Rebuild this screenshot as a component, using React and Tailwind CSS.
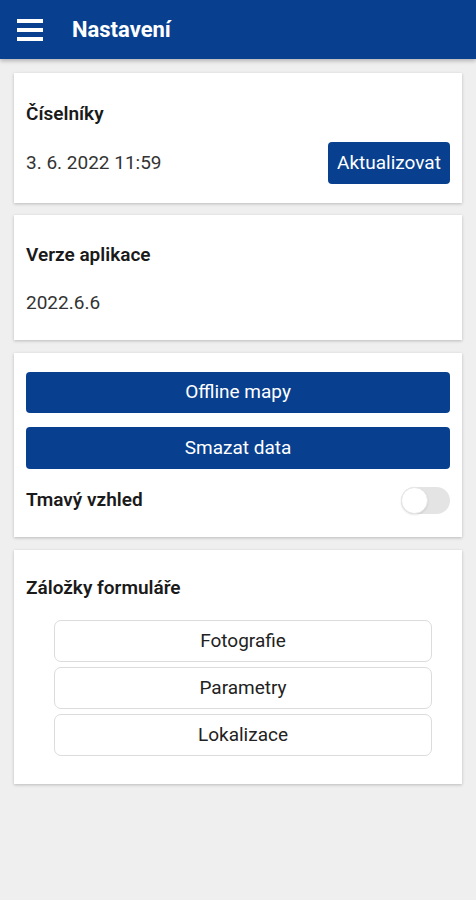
import React, { useState } from 'react';

const font = { fontFamily: 'Roboto, "Liberation Sans", sans-serif' };

const Card = ({ className = '', children }) => (
  <div className={`mx-[14px] bg-white shadow-[0_1px_3px_rgba(0,0,0,0.22)] px-3 ${className}`}>
    {children}
  </div>
);

const BlueButton = ({ children, className = '' }) => (
  <button className={`bg-[#08408f] text-white text-[19px] rounded-[4px] ${className}`}>
    {children}
  </button>
);

const TabButton = ({ children }) => (
  <button className="w-full h-[42px] border border-[#dcdcdc] rounded-[7px] bg-white text-[19px] text-[#222]">
    {children}
  </button>
);

export default function App() {
  const [dark, setDark] = useState(false);

  return (
    <div style={font} className="min-h-[900px] bg-[#efefef] pb-8">
      <header className="h-[59px] bg-[#08408f] flex items-center shadow-[0_2px_4px_rgba(0,0,0,0.25)]">
        <div className="ml-[17px] w-[26px] flex flex-col gap-[5px]">
          <span className="block h-[4px] bg-white" />
          <span className="block h-[4px] bg-white" />
          <span className="block h-[4px] bg-white" />
        </div>
        <h1 className="ml-[29px] text-white text-[22px] font-bold">Nastavení</h1>
      </header>

      <Card className="mt-[14px] pt-[28px] pb-[19px]">
        <div className="text-[19px] leading-[26px] font-semibold text-[#1a1a1a]">Číselníky</div>
        <div className="mt-[15px] flex items-center justify-between">
          <span className="text-[19px] text-[#333]">3. 6. 2022 11:59</span>
          <BlueButton className="w-[122px] h-[42px]">Aktualizovat</BlueButton>
        </div>
      </Card>

      <Card className="mt-[12px] pt-[27px] pb-[16px]">
        <div className="text-[19px] leading-[26px] font-semibold text-[#1a1a1a]">Verze aplikace</div>
        <div className="mt-[14px] h-[42px] flex items-center text-[19px] text-[#333]">2022.6.6</div>
      </Card>

      <Card className="mt-[13px] pt-[19px] pb-[21px]">
        <div className="flex flex-col gap-[14px]">
          <BlueButton className="w-full h-[41px]">Offline mapy</BlueButton>
          <BlueButton className="w-full h-[42px]">Smazat data</BlueButton>
        </div>
        <div className="mt-[15px] h-[32px] flex items-center justify-between">
          <span className="text-[19px] font-semibold text-[#1a1a1a]">Tmavý vzhled</span>
          <button
            onClick={() => setDark(!dark)}
            className="w-[49px] h-[27px] rounded-full bg-[#e4e4e4] relative"
          >
            <span className="absolute left-0 top-0 w-[27px] h-[27px] rounded-full bg-white border border-[#e6e6e6] shadow-[0_1px_2px_rgba(0,0,0,0.1)]" />
          </button>
        </div>
      </Card>

      <Card className="mt-[13px] pt-[25px] pb-[28px]">
        <div className="text-[19px] leading-[26px] font-semibold text-[#1a1a1a]">Záložky formuláře</div>
        <div className="mt-[19px] ml-[28px] mr-[18px] flex flex-col gap-[5px]">
          <TabButton>Fotografie</TabButton>
          <TabButton>Parametry</TabButton>
          <TabButton>Lokalizace</TabButton>
        </div>
      </Card>
    </div>
  );
}
